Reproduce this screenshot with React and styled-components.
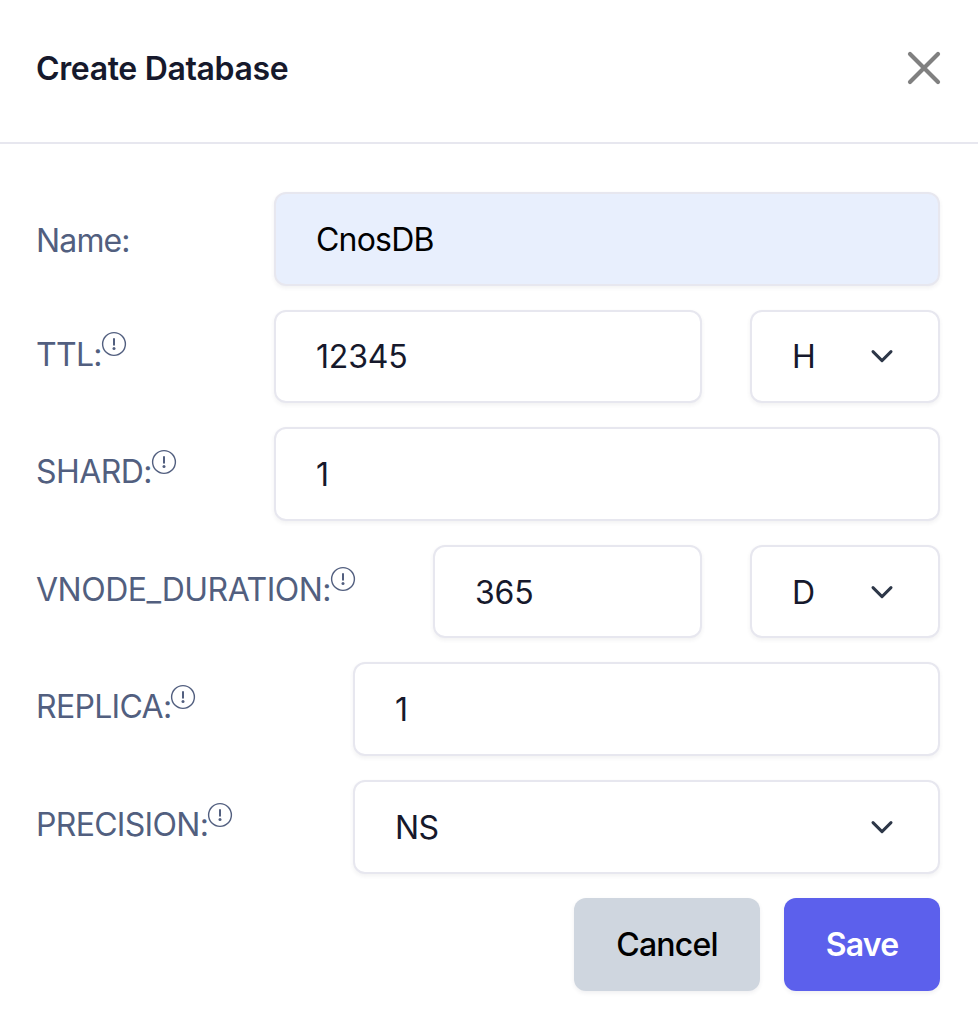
import React from "react";
import styled, { createGlobalStyle } from "styled-components";

const GlobalStyle = createGlobalStyle`
  *, *::before, *::after { box-sizing: border-box; }
  body {
    margin: 0;
    background: #ffffff;
    font-family: Inter, "Liberation Sans", sans-serif;
    font-size: 32px;
    color: #16192c;
  }
`;

const Dialog = styled.section`
  width: 978px;
  height: 1032px;
  background: #ffffff;
  overflow: hidden;
`;

const Header = styled.header`
  display: flex;
  align-items: center;
  justify-content: space-between;
  height: 144px;
  padding: 0 36px 6px;
  border-bottom: 2px solid #e7e7ef;
`;

const Title = styled.h1`
  margin: 0;
  padding-top: 2px;
  font-size: 32px;
  line-height: 40px;
  font-weight: 600;
  letter-spacing: -0.36px;
`;

const CloseButton = styled.button`
  display: flex;
  padding: 0;
  border: 0;
  background: none;
  color: #808080;
`;

const Form = styled.form`
  display: flex;
  flex-direction: column;
  gap: 24px;
  padding: 48px 38px 0 36px;
`;

const Row = styled.div`
  display: flex;
  height: 93.6px;
`;

const Label = styled.label`
  flex: none;
  display: flex;
  align-items: flex-start;
  width: ${(p) => p.$width}px;
  padding-top: ${(p) => (p.$plain ? 25 : 21)}px;
  color: #525f7f;
  line-height: 48px;
  letter-spacing: ${(p) => p.$tracking || -0.7}px;
  white-space: nowrap;
`;

const HintIcon = styled.svg`
  flex: none;
  width: 26px;
  height: 26px;
  margin: 0.6px 0 0 -1px;
`;

const controlBox = `
  border: 2px solid #e7e7ef;
  border-radius: 12px;
  background: #ffffff;
  box-shadow: 0 2px 4px rgba(50, 50, 71, 0.07);
  color: #16192c;
  font: inherit;
`;

const Input = styled.input`
  ${controlBox}
  flex: 1;
  min-width: 0;
  height: 100%;
  padding: 1px 40px 0;
  outline: none;
  letter-spacing: ${(p) => (p.$filled ? -0.8 : -0.2)}px;
  ${(p) => p.$filled && "background: #e8effd; color: #000000;"}
`;

const SelectBox = styled.div`
  ${controlBox}
  display: flex;
  align-items: center;
  justify-content: space-between;
  flex: ${(p) => (p.$width ? "none" : 1)};
  width: ${(p) => (p.$width ? `${p.$width}px` : "auto")};
  margin-left: ${(p) => (p.$width ? 48 : 0)}px;
  height: 100%;
  padding: 0 40px;
  letter-spacing: -0.5px;
`;

const SelectValue = styled.span`
  padding-top: 1px;
`;

const Actions = styled.div`
  display: flex;
  justify-content: flex-end;
  gap: 24px;
`;

const Button = styled.button`
  width: ${(p) => p.$width}px;
  height: 93.6px;
  padding: 1px 0 0;
  border: 0;
  border-radius: 12px;
  font: inherit;
  font-weight: ${(p) => (p.$primary ? 600 : 500)};
  letter-spacing: -0.8px;
  background: ${(p) => (p.$primary ? "#5c60ec" : "#cfd6df")};
  color: ${(p) => (p.$primary ? "#ffffff" : "#000000")};
  box-shadow: 0 2px 4px rgba(50, 50, 71, 0.08);
`;

const Hint = () => (
  <HintIcon viewBox="0 0 26 26" fill="none" stroke="#525f7f">
    <circle cx="13" cy="13" r="11.4" strokeWidth="1.4" />
    <path d="M13 7.9v5.8" strokeWidth="2" strokeLinecap="round" />
    <circle cx="13" cy="17.4" r="1.5" fill="#525f7f" stroke="none" />
  </HintIcon>
);

const Chevron = () => (
  <svg width="32" height="32" viewBox="0 0 32 32" fill="none" stroke="#2d3748" strokeWidth="3" strokeLinecap="round" strokeLinejoin="round">
    <path d="M7 11.6l9 9 9-9" />
  </svg>
);

const Select = ({ value, width }) => (
  <SelectBox $width={width} role="combobox">
    <SelectValue>{value}</SelectValue>
    <Chevron />
  </SelectBox>
);

export default function App() {
  return (
    <>
      <GlobalStyle />
      <Dialog role="dialog">
        <Header>
          <Title>Create Database</Title>
          <CloseButton aria-label="Close">
            <svg width="36" height="36" viewBox="0 0 36 36" stroke="#808080" strokeWidth="4.2" strokeLinecap="round">
              <path d="M4 4l28 28M32 4L4 32" />
            </svg>
          </CloseButton>
        </Header>
        <Form>
          <Row>
            <Label $width={238} $plain $tracking={-0.85}>Name:</Label>
            <Input $filled defaultValue="CnosDB" />
          </Row>
          <Row>
            <Label $width={238}>TTL:<Hint /></Label>
            <Input defaultValue="12345" />
            <Select value="H" width={190} />
          </Row>
          <Row>
            <Label $width={238} $tracking={-0.55}>SHARD:<Hint /></Label>
            <Input defaultValue="1" />
          </Row>
          <Row>
            <Label $width={397} $tracking={-0.5}>VNODE_DURATION:<Hint /></Label>
            <Input defaultValue="365" />
            <Select value="D" width={190} />
          </Row>
          <Row>
            <Label $width={317}>REPLICA:<Hint /></Label>
            <Input defaultValue="1" />
          </Row>
          <Row>
            <Label $width={317}>PRECISION:<Hint /></Label>
            <Select value="NS" />
          </Row>
          <Actions>
            <Button type="button" $width={186}>Cancel</Button>
            <Button type="button" $primary $width={156}>Save</Button>
          </Actions>
        </Form>
      </Dialog>
    </>
  );
}
